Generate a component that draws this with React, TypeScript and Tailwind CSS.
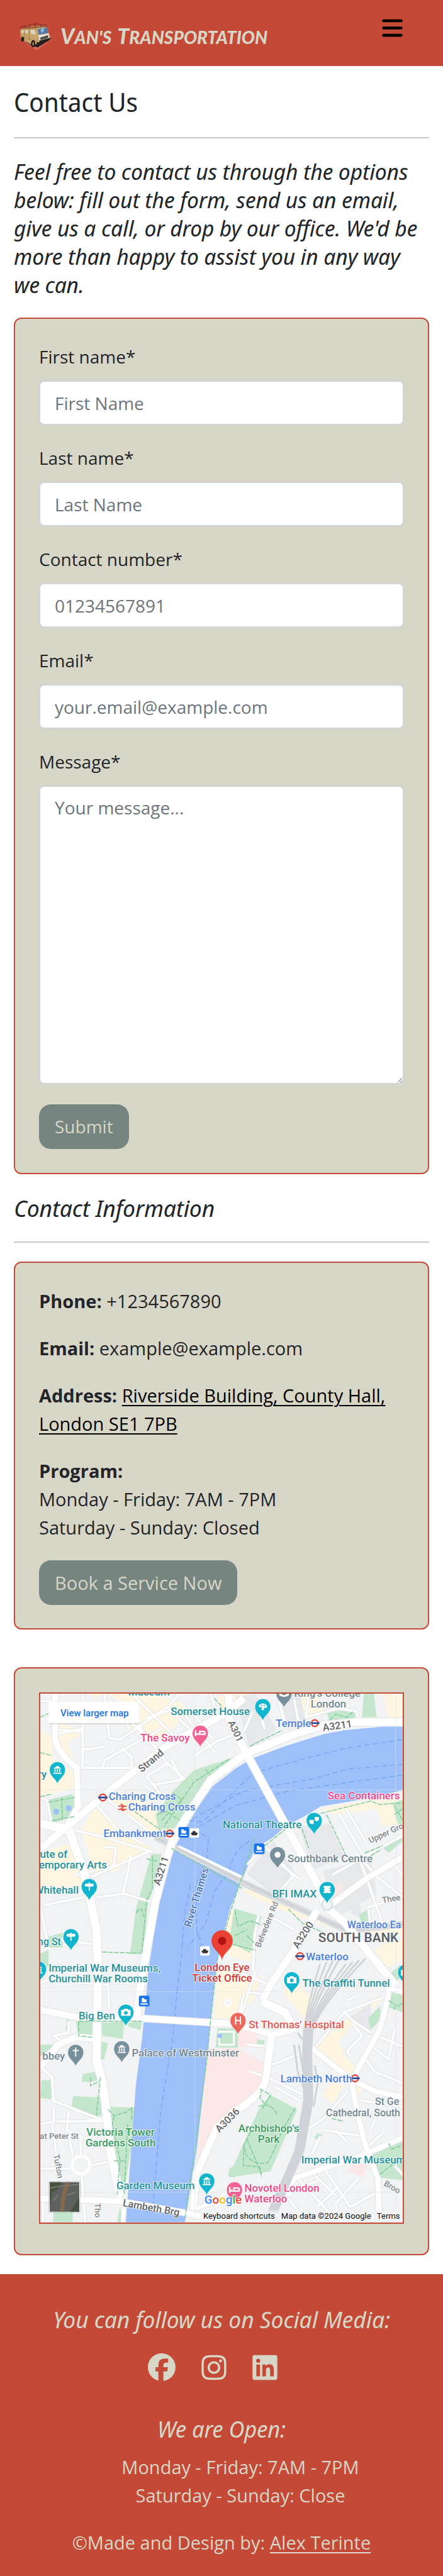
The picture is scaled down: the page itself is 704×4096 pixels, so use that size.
import type { ReactNode } from "react";
import { FaBars, FaFacebook, FaInstagram, FaLinkedin } from "react-icons/fa6";

const TEAL = "#1f919d";
const BLUE = "#4b80dd";
const PINK = "#ee4789";
const SLATE = "#72878f";
const ROAD = "#5f6368";
const PARK = "#3b9a5f";
const RED = "#c93b37";
const PIN_TEAL = "#12b5cb";
const PIN_SLATE = "#78909c";

type Label = { t: string; x: number; y: number; c: string; s?: number; a?: "start" | "middle" | "end"; r?: number; w?: number };

const labels: Label[] = [
  { t: "Museum", x: 149, y: 3, c: TEAL },
  { t: "Somerset House", x: 221, y: 36, c: TEAL },
  { t: "The Savoy", x: 170, y: 81, c: PINK },
  { t: "Strand", x: 191, y: 118, c: ROAD, a: "middle", r: -40, s: 17 },
  { t: "ry", x: 11, y: 143, c: TEAL, a: "end" },
  { t: "Charing Cross", x: 116, y: 180, c: BLUE },
  { t: "Charing Cross", x: 149, y: 198, c: BLUE },
  { t: "Embankment", x: 107, y: 243, c: BLUE },
  { t: "ute of", x: 46, y: 278, c: TEAL, a: "end" },
  { t: "emporary Arts", x: 113, y: 296, c: TEAL, a: "end" },
  { t: "Whitehall", x: 65, y: 339, c: TEAL, a: "end" },
  { t: "ng St", x: 35, y: 426, c: TEAL, a: "end", s: 17 },
  { t: "A3211", x: 210, y: 302, c: ROAD, a: "middle", r: -72, s: 17 },
  { t: "River Thames", x: 270, y: 347, c: "#4470bd", a: "middle", r: -73, s: 17 },
  { t: "Imperial War Museums,", x: 14, y: 471, c: TEAL },
  { t: "Churchill War Rooms", x: 14, y: 489, c: TEAL },
  { t: "London Eye", x: 308, y: 470, c: RED, a: "middle", s: 18 },
  { t: "Ticket Office", x: 308, y: 488, c: RED, a: "middle", s: 18 },
  { t: "Big Ben", x: 65, y: 552, c: TEAL },
  { t: "bbey", x: 42, y: 620, c: SLATE, a: "end" },
  { t: "Palace of Westminster", x: 155, y: 615, c: SLATE },
  { t: "Victoria Tower", x: 136, y: 749, c: PARK, a: "middle" },
  { t: "Gardens South", x: 136, y: 767, c: PARK, a: "middle" },
  { t: "at Peter St", x: 65, y: 755, c: "#80868b", a: "end", s: 14 },
  { t: "Tufton", x: 26, y: 802, c: "#80868b", a: "middle", s: 14, r: 80 },
  { t: "Tho", x: 92, y: 864, c: "#80868b", s: 14, r: 88 },
  { t: "Garden Museum", x: 129, y: 840, c: TEAL },
  { t: "Lambeth Brg", x: 187, y: 877, c: ROAD, a: "middle", r: 10, s: 17 },
  { t: "King's College", x: 430, y: 5, c: SLATE },
  { t: "London", x: 458, y: 23, c: SLATE },
  { t: "Temple", x: 399, y: 56, c: BLUE },
  { t: "A3211", x: 504, y: 60, c: ROAD, a: "middle", r: -8, s: 17 },
  { t: "A301", x: 326, y: 66, c: ROAD, a: "middle", r: 65, s: 16 },
  { t: "Sea Containers", x: 487, y: 179, c: PINK },
  { t: "National Theatre", x: 309, y: 228, c: TEAL },
  { t: "Upper Gro", x: 559, y: 254, c: "#80868b", r: -25, s: 14 },
  { t: "Southbank Centre", x: 419, y: 286, c: SLATE },
  { t: "BFI IMAX", x: 393, y: 345, c: TEAL },
  { t: "Belvedere Rd", x: 388, y: 393, c: "#80868b", a: "middle", r: -68, s: 14 },
  { t: "A3200", x: 450, y: 412, c: ROAD, a: "middle", r: -57, s: 17 },
  { t: "Thee", x: 580, y: 355, c: "#80868b", r: -10, s: 14 },
  { t: "Waterloo Ea", x: 520, y: 398, c: BLUE, s: 17 },
  { t: "SOUTH BANK", x: 471, y: 421, c: "#5f6368", s: 22, w: 600 },
  { t: "Waterloo", x: 450, y: 452, c: BLUE },
  { t: "The Graffiti Tunnel", x: 444, y: 497, c: TEAL },
  { t: "St Thomas' Hospital", x: 353, y: 567, c: "#e25950" },
  { t: "Lambeth North", x: 407, y: 659, c: BLUE },
  { t: "St Ge", x: 567, y: 697, c: SLATE, s: 17 },
  { t: "Cathedral, South", x: 484, y: 716, c: SLATE, s: 17 },
  { t: "Archbishop's", x: 387, y: 743, c: PARK, a: "middle" },
  { t: "Park", x: 387, y: 761, c: PARK, a: "middle" },
  { t: "A3036", x: 321, y: 727, c: ROAD, a: "middle", r: -45, s: 17 },
  { t: "Imperial War Museum", x: 442, y: 796, c: TEAL },
  { t: "Broo", x: 581, y: 833, c: "#80868b", r: 30, s: 14 },
  { t: "Novotel London", x: 346, y: 844, c: PINK },
  { t: "Waterloo", x: 346, y: 862, c: PINK },
];

const minorRoads = [
  "M0 13H25M27 61L72 64M72 0V126M72 126H155V108L138 92M109 0L117 75 135 78 215 23M105 126L110 112 205 60",
  "M155 0L215 60 240 88M165 52L215 118 245 145M120 12L180 75M179 42L232 24M215 23L255 62M240 30L296 100",
  "M178 157L210 178 180 140 216 118M190 155L240 146 222 112M262 104L300 80 334 68M288 0L296 24M250 20L292 77",
  "M0 175L12 182 18 215M0 225L45 228 110 244 190 268M110 260L128 261 125 290 88 310 187 266M154 275L140 340M96 345L142 339 184 352",
  "M0 360L12 420M8 358L75 345M92 300L60 308M95 188L130 230 175 255M112 178L180 230M20 415L90 425",
  "M65 490L115 494 117 535M0 490L30 480M48 555V575L22 580 48 595M92 542V585M0 632L20 650 22 690 85 715 105 722M23 702V725L0 730M20 730L30 800M48 710L45 740 72 752",
  "M115 725L82 722M48 745L55 785M68 750V782M0 805L50 805M85 800L120 792M70 812L76 896M5 850V896M28 725L120 725",
  "M400 0L415 50M430 10L440 60M455 0L450 40 505 25 535 30 540 44M360 30L345 64M380 60L370 20",
  "M518 195L552 252M505 202L548 276M495 307L614 240M538 272L580 390M430 308L405 335 395 370M350 290L380 258 430 310M402 285L440 315",
  "M555 362L614 345M545 282L570 310 614 345M556 365L560 400M370 375L363 410 360 470M395 380L430 400M320 465L400 498M600 290L614 310",
  "M345 510L335 550M300 460L370 485M365 470L340 545M350 505L380 510M350 595L385 598M355 640L382 650M385 630L404 625 440 610M385 650L445 680M395 665L440 690",
  "M465 600L515 540 580 515M515 540L530 555 560 575M520 520L535 512M530 560L545 580 520 605 525 615M570 580L614 598M565 600L590 620 600 570M545 610L565 640 614 660",
  "M520 675L480 720 450 740 435 790M480 740L545 750M475 750L460 780M500 740L520 760M530 790L580 745M435 820L490 880M460 812L500 850M480 804L525 870 580 840",
  "M540 820L500 865 510 896M505 835L470 870M430 840L470 826M420 855L450 896M395 880L420 896M600 800L614 815M545 690L614 700M575 700L560 740",
  "M70 60L30 68M72 95L110 90M74 20L110 22M235 0L216 24M135 10L150 60",
];

const mainRoads: [string, number][] = [
  ["M0 263L45 226 119 163 215 88 309 36 345 8", 12],
  ["M25 0V75Q28 100 62 126L64 191 45 225", 10],
  ["M0 220L45 230M49 232L75 305 95 398 98 470 95 622Q105 650 110 691L119 777 135 853", 14],
  ["M162 555L172 480 195 353 215 277 225 246 259 191 289 146 349 101 429 69 482 53 539 48H614", 13],
  ["M0 536L65 549 165 550 332 560 392 577", 11],
  ["M0 632L30 595 62 582 95 585", 11],
  ["M319 0L320 43 349 101 415 222 469 322 485 363 515 387 559 442 602 495", 13],
  ["M489 360L555 312 614 277", 10],
  ["M469 367L432 432 392 490 377 519M392 577L382 653Q378 680 329 708L299 736 265 812 259 874", 12],
  ["M375 522L415 540 429 568 392 577", 13],
  ["M459 600L525 653 570 675 614 684", 9],
  ["M614 505L591 500 589 515 575 570 529 653", 9],
  ["M527 653L533 690 549 760 572 822 574 896", 9],
  ["M614 753L549 781 429 822 420 850", 9],
  ["M0 856L132 860 245 880 290 890", 10],
  ["M135 853L142 870 140 896M259 874L300 860 320 840", 6],
];

const tracks = [0, 1, 2, 3, 4, 5, 6, 7];

const glyphs: Record<string, ReactNode> = {
  bed: <path d="M-8-5V5M-8 2H8V-1Q8-3 5-3H-1V2M-5-1V0" stroke="#fff" strokeWidth="2.4" fill="none" />,
  museum: <path d="M-7-2L0-7 7-2ZM-5-1H-3V4H-5ZM-1-1H1V4H-1ZM3-1H5V4H3ZM-7 5H7V7H-7Z" fill="#fff" />,
  sign: <path d="M-1-7H1V-5H6L8-3 6 0H1V7H-1V0H-6L-8-2-6-5H-1Z" fill="#fff" />,
  cross: <path d="M-1-8H1V-4H5V-2H1V7H-1V-2H-5V-4H-1Z" fill="#fff" />,
  camera: <path fillRule="evenodd" d="M-8-4H-4L-3-6H3L4-4H8V6H-8ZM0-2A3 3 0 1 0 0 4 3 3 0 1 0 0-2Z" fill="#fff" />,
  film: <path d="M-6-6H6V-3H4V-1H6V1H4V3H6V6H-6V3H-4V1H-6V-1H-4V-3H-6Z" fill="#fff" />,
  masks: <path d="M-8-1H-1V6Q-5 7-8 4ZM1-6H8V-1Q5 3 2 0L1 1Z" fill="#fff" />,
  palette: <path d="M-7-2Q0-9 7-2 8 3 3 2 1 2 2 5 0 8-2 5V1H-6ZM-3-3h2v2h-2zM2-3h2v2H2z" fillRule="evenodd" fill="#fff" />,
  h: <path d="M-5-7H-3V-1H3V-7H5V7H3V1H-3V7H-5Z" fill="#fff" />,
  dot: <circle r="5" fill="#fff" />,
  cap: <path d="M-8-1L0 3 8-1V3Q0 8-8 3Z" fill="#fff" />,
};

const pins: [number, number, string, string][] = [
  [271, 67, "#f06292", "bed"],
  [29, 129, PIN_TEAL, "museum"],
  [83, 327, PIN_TEAL, "sign"],
  [52, 412, PIN_TEAL, "sign"],
  [-3, 467, PIN_TEAL, "museum"],
  [377, 22, PIN_TEAL, "palette"],
  [413, 0, PIN_SLATE, "cap"],
  [464, 215, PIN_TEAL, "masks"],
  [402, 273, PIN_SLATE, "dot"],
  [486, 332, PIN_TEAL, "film"],
  [426, 485, PIN_TEAL, "camera"],
  [619, 472, PIN_TEAL, "camera"],
  [335, 554, "#ec675c", "h"],
  [145, 540, PIN_TEAL, "camera"],
  [60, 608, PIN_SLATE, "cross"],
  [138, 602, PIN_SLATE, "museum"],
  [282, 826, PIN_TEAL, "museum"],
  [329, 841, "#f06292", "bed"],
];

const stations: [number, number][] = [[106, 176], [219, 237], [465, 50], [440, 445], [533, 652]];
const piers: [number, number][] = [[243, 235], [371, 263], [176, 521]];
const boats: [number, number][] = [[261, 236], [279, 436]];

function LondonMap() {
  return (
    <svg viewBox="0 0 614 896" className="block w-full font-['Roboto',sans-serif]" role="img" aria-label="Map of the South Bank, London">
      <rect width="614" height="896" fill="#f1f3f4" />
      <g fill="#fef6e0">
        <path d="M85 0H110L90 8ZM33 50L65 60V75L45 80 55 110 38 95 28 70ZM0 65L20 70V110L55 130 60 160 20 170 0 172Z" />
        <path d="M118 0H180L240 15 250 30 215 70 190 85 150 55 165 50 140 20ZM300 5L350 0V20L305 32ZM430 0H465L480 30 440 50 425 35Z" />
        <path d="M70 230L90 195 120 210 145 240 190 262 150 280 130 300 90 305ZM120 180L160 165 205 210 225 240 195 240 130 195ZM0 270L60 250 80 330 0 325Z" />
        <path d="M300 455L320 470 375 480 360 520 330 550H295L300 480ZM345 335L360 325 480 385 614 398V410L520 405 440 380 350 340ZM330 365L322 370 305 440 358 455 360 440Z" />
        <path d="M475 195L570 180 614 175V220L580 225 570 195 500 205ZM565 435L600 415 614 420V450L590 465ZM410 505L430 490 470 520 455 560ZM460 600L515 555 575 510 580 520 525 565 505 590 520 620 540 640 520 645 490 630ZM478 680L495 655 515 665 495 695ZM535 655L545 675 537 680Z" />
        <path d="M560 25L570 30V45H555ZM580 0H600L614 8V45H590Z" />
      </g>
      <g fill="#e6e8ec">
        <path d="M330 5L365 0 400 60 355 95ZM405 0H440L450 50 420 60ZM395 250L430 300 400 345 350 305ZM440 225L490 220 515 275 460 300ZM480 300L560 280 570 340 500 380ZM515 350L540 345 545 380 530 375ZM520 550L560 525 560 580Z" />
      </g>
      <g fill="#fce8e6">
        <path d="M284 602L335 600 385 630 375 670 310 715 265 795ZM325 560L365 565 370 600 325 598ZM495 325L510 320 513 335 500 345ZM518 810L535 795 555 800 545 820 530 812Z" />
      </g>
      <g fill="#c3e6cd">
        <path d="M328 108L290 150 232 228 200 230 195 205 225 165 260 130ZM188 272H205L200 300 182 360 175 440 152 442 162 365ZM14 180L55 170 60 205 22 220ZM0 440L14 435V460L5 475H0ZM14 412L38 405V430H16Z" />
        <path d="M60 553L95 555 90 580 65 583ZM103 558L142 556 140 585 105 580ZM148 558L172 556 170 570 150 565ZM104 590L115 592 108 620H102ZM0 595L25 595 0 615ZM2 655L20 655V688L0 685ZM72 645L95 640 98 655 85 658 70 658ZM56 682L105 685V715L85 717 52 705ZM115 700L160 702 155 765 140 855 128 850ZM46 548L50 555 48 574 43 570Z" />
        <path d="M328 364L375 378 355 440 320 420ZM485 30L535 28 533 42 490 48ZM548 0H565L570 40H545ZM300 567L335 568V600H297ZM368 586L380 588V600L366 598ZM390 680L435 705 390 810 320 820 332 790 370 705ZM540 375L555 365 560 385 543 388Z" />
        <path d="M560 780L614 757V825L575 820ZM590 515L603 498 614 512V540L590 532ZM575 530L578 550 560 570 555 550ZM580 260L614 245V250L590 270ZM597 185L614 180V222L605 220ZM470 745L478 748 472 758 464 753ZM22 872L55 870V896H22ZM588 478L610 460 614 480 605 486ZM135 870L140 896H130ZM320 806L333 795 330 820 318 818Z" />
      </g>
      <g fill="none" stroke="#dfe2e5" strokeWidth="6" strokeLinejoin="round">{minorRoads.map((d) => <path key={d} d={d} />)}</g>
      <path
        fill="#9dc0fa"
        d="M614 56H579L515 62 479 69 415 89 359 110 332 126 292 157 265 196 252 219 232 253 219 281 205 332 195 394 189 432 183 470 179 519 172 588 162 663 155 760 145 896H245L265 774 282 622 292 519 300 452 312 401 322 363 345 308 365 260 379 253 395 243 415 225 449 207 475 191 529 182 569 174 614 164Z"
      />
      <circle cx="27" cy="200" r="5" fill="#9dc0fa" />
      <circle cx="48" cy="194" r="5" fill="#9dc0fa" />
      <g fill="none" stroke="#78a6f3" strokeWidth="1.5" strokeDasharray="9 5">
        <path d="M252 215L275 217 330 165 360 135 440 112 520 92 614 78M258 212L345 165 460 145 520 128 614 120M270 225L330 190 420 165 540 148 614 138M262 230L285 245 282 280 262 330 265 400 275 430M355 250Q330 260 320 300L295 335 280 390 250 430M240 430L245 370 255 320M232 500L225 580 205 700 190 880M240 440L232 500" />
      </g>
      <g fill="none" stroke="#fff" strokeWidth="4" strokeLinejoin="round">{minorRoads.map((d) => <path key={d} d={d} />)}</g>
      <path d="M195 243L332 313 342 320 462 375 522 402 614 391" fill="none" stroke="#d0d3d8" strokeWidth="11" />
      <path d="M195 240L332 309 462 371 522 398 614 388M195 247L332 318 462 380 522 406 614 395" fill="none" stroke="#e6e8ea" strokeWidth="1.5" />
      <path d="M235 259L342 311" stroke="#fff" strokeWidth="4" />
      {mainRoads.map(([d, w]) => <path key={d} d={d} fill="none" stroke="#e3e5e8" strokeWidth={w + 2} strokeLinejoin="round" />)}
      {mainRoads.map(([d, w]) => <path key={d} d={d} fill="none" stroke="#fff" strokeWidth={w} strokeLinejoin="round" />)}
      <g fill="none" stroke="#cfd3d7" strokeWidth="3">
        {tracks.map((i) => (
          <path key={i} d={`M${474 + i * 11} ${458 - (i % 4) * 3}Q${452 + i * 3} 530 ${447 + i * 2} 570L${445 + i * 2} 610 ${447 + i * 2} 690 ${432 + i * 2} 775 ${386 + i * 2} 880`} />
        ))}
        <path d="M430 595L436 640 452 685M438 595L445 640M465 630L470 660 463 700M436 575L455 600" />
      </g>
      <circle cx="69" cy="799" r="15" fill="#f1f3f4" stroke="#fff" strokeWidth="5" />
      <circle cx="486" cy="358" r="9" fill="#f1f3f4" stroke="#dfe2e5" strokeWidth="3" />
      <circle cx="318" cy="524" r="5" fill="#f1f3f4" stroke="#fff" strokeWidth="3" />
      <rect x="303" y="573" width="25" height="22" fill="none" stroke="#fff" strokeWidth="3" />
      <circle cx="304" cy="580" r="4" fill="#9dc0fa" />
      <g fill="none" stroke="#7fcb97" strokeWidth="1.6" strokeDasharray="8 2">
        <path d="M320 111L260 150 210 225M280 128L288 138M225 168L240 180 205 215M198 205L215 200 236 215M160 200L205 232M0 100L20 105M0 40L22 30M14 184L58 176M20 215L60 208M36 176L38 215M0 175L20 170M355 89L410 62M295 8L308 22M222 262L342 330M362 244L345 300 322 370 300 450 290 540 282 622 262 770 245 890" />
        <path d="M380 258L415 230M440 220L455 262M485 205L518 275M475 203L560 182 575 188 614 185M190 275V330L180 350 172 440M163 372Q165 365 172 365L175 378M180 280L200 285M105 438L170 440M65 555V580L90 583M65 555H172M115 705L125 715 145 710 155 702V725M125 715L122 730 135 790 130 850M148 730L142 850M125 792H144M85 650V665L100 657M102 650L95 715" />
        <path d="M372 670L390 680 375 705M375 670L372 685 380 695M370 700Q390 690 402 715M432 702L410 740 398 770 385 795Q360 800 348 780L345 765 358 740M350 755L375 815M345 765L344 800 372 802 375 820M330 368L335 395 355 385 375 392M350 410L365 425M330 410L350 400M325 425L365 435M490 45L500 35 520 40 530 30M590 520L605 530 614 525M600 530V535M575 815L600 795M590 762L595 772 614 765M550 270L580 258M560 275L575 265M600 190L614 215M600 205L614 195M494 720L514 725M420 365L445 390 480 405" />
      </g>
      <g stroke="#dfe6ef" strokeWidth="1" opacity=".6">
        <path d="M0 163H614M0 505H614M0 845H614M262 0V896M602 0V896" />
      </g>

      {stations.map(([x, y]) => (
        <g key={`${x}-${y}`}>
          <circle cx={x} cy={y} r="5.5" fill="#fff" stroke="#e0453c" strokeWidth="2.6" />
          <path d={`M${x - 8} ${y}H${x + 8}`} stroke="#2b4a9a" strokeWidth="3" />
        </g>
      ))}
      <path d="M132 191H146M132 196H146M136 187L142 191 136 196 142 199" stroke="#ea4b44" strokeWidth="2" fill="none" />
      {piers.map(([x, y]) => (
        <g key={`${x}-${y}`}>
          <rect x={x - 9} y={y - 9} width="18" height="18" rx="3" fill="#1a73e8" />
          <path d={`M${x - 4} ${y - 5}h4v2h4v5h-8zM${x - 6} ${y + 4}h12v2h-12z`} fill="#fff" />
        </g>
      ))}
      {boats.map(([x, y]) => (
        <g key={`${x}-${y}`}>
          <rect x={x - 8} y={y - 8} width="16" height="16" rx="2" fill="#fff" />
          <path d={`M${x - 6} ${y}l3-1v-2h5v2l4 1-2 4h-8z`} fill="#333" />
        </g>
      ))}
      {pins.map(([x, y, c, g]) => (
        <g key={`${x}-${y}`}>
          <path transform={`translate(${x} ${y})`} d="M0 25C-1 16-13.500 12-13.500 0A13.500 13.500 0 0 1 13.500 0C13.500 12 1 16 0 25Z" fill={c} stroke="#fff" strokeWidth=".8" />
          <g transform={`translate(${x} ${y})`}>{glyphs[g]}</g>
        </g>
      ))}
      <path d="M308 452C306 438 290 434 290 419A18 18 0 0 1 326 419C326 434 310 438 308 452Z" fill="#ea4335" />
      <circle cx="308" cy="419" r="7" fill="#b31412" />

      {labels.map((l) => (
        <text
          key={`${l.t}-${l.x}-${l.y}`}
          x={l.x}
          y={l.y}
          fill={l.c}
          fontSize={l.s ?? 18}
          fontWeight={l.w ?? 500}
          textAnchor={l.a ?? "start"}
          transform={l.r ? `rotate(${l.r} ${l.x} ${l.y})` : undefined}
          stroke="#fff"
          strokeWidth="2"
          strokeOpacity=".8"
          strokeLinejoin="round"
          paintOrder="stroke"
        >
          {l.t}
        </text>
      ))}

      <a href="#map">
        <rect x="15" y="16" width="153" height="36" fill="#000" opacity=".12" />
        <rect x="14" y="14" width="154" height="36" rx="1" fill="#fff" />
        <text x="34" y="38" fontSize="16" fontWeight="500" fill="#1a73e8">View larger map</text>
      </a>

      <rect x="14" y="826" width="54" height="54" rx="3" fill="#000" opacity=".2" />
      <rect x="15" y="827" width="52" height="52" rx="2" fill="#fff" />
      <rect x="16" y="828" width="50" height="50" rx="1" fill="#5d625f" />
      <path d="M16 828H36L30 840 20 845 16 870ZM50 878L66 855V878Z" fill="#46533f" />
      <path d="M42 828L36 850 33 878H40L43 850 50 828Z" fill="#85694e" />
      <path d="M16 838L40 834 66 832M45 850L60 845M22 860L30 850" stroke="#7d7b70" strokeWidth="2" fill="none" />

      <rect x="270" y="876" width="344" height="20" fill="#f1f3f4" opacity=".7" />
      <text x="278" y="865" fontSize="20" fontWeight="500" stroke="#fff" strokeWidth="2" paintOrder="stroke">
        <tspan fill="#4285f4">G</tspan><tspan fill="#ea4335">o</tspan><tspan fill="#fbbc04">o</tspan><tspan fill="#4285f4">g</tspan><tspan fill="#34a853">l</tspan><tspan fill="#ea4335">e</tspan>
      </text>
      <g fontSize="14" fill="#111">
        <text x="276" y="890">Keyboard shortcuts</text>
        <text x="408" y="890">Map data ©2024 Google</text>
        <text x="570" y="890">Terms</text>
      </g>
    </svg>
  );
}

function VanLogo() {
  return (
    <svg viewBox="0 0 52 48" className="h-[46px] w-[50px]" aria-hidden="true">
      <path d="M0 27L28 47 52 30 40 24Z" fill="#d4685a" />
      <path d="M3 28L20 39 30 42 50 30 48 26 24 30Z" fill="#2b1d1c" />
      <path d="M1 12L21 7 44 6 45 9 26 16 2 14Z" fill="#b58a4f" />
      <path d="M1 13L26 12 29 30 28 37 21 38 2 28Z" fill="#c9a468" />
      <path d="M26 12Q35 7 45 9L50 22 51 27 31 34 28 33Z" fill="#c3a273" />
      <path d="M30 12L45 9 48 18 32 21Z" fill="#4f78a5" />
      <path d="M35 12L41 10 40 16 36 18Z" fill="#93b6d3" />
      <path d="M31 22L48 19 50 26 33 31Z" fill="#e4dfd4" />
      <path d="M34 26L47 22 48 26 35 30Z" fill="#4d4846" />
      <path d="M33 31L52 26V28L33 35Z" fill="#26201f" />
      <path d="M3 13.500L7 13.500V18L3 18ZM8.500 13.500L14 13V19L9 18ZM18 13L25 13 27 20 19 20Z" fill="#d9d2c0" />
      <path d="M16 13V30M8 14V27" stroke="#8f713f" strokeWidth=".7" />
      <path d="M3 24L15 28 28 32" stroke="#a27f46" strokeWidth="1" fill="none" />
      <ellipse cx="22.500" cy="36" rx="3.500" ry="6" fill="#231b1a" />
      <ellipse cx="22.500" cy="36" rx="1.500" ry="3" fill="#98805b" />
      <ellipse cx="5" cy="28.500" rx="2.500" ry="4" fill="#231b1a" />
      <path d="M2 12V8L26 3 44 5V8M2 8L16 10 44 7M9 10V7M17 10V5M26 9V3M35 9V4M26 1V4" stroke="#6b2e27" strokeWidth=".9" fill="none" />
    </svg>
  );
}

const cardClass = "rounded-[12px] border-2 border-[#c44936] bg-[#d8d6c6] px-[38px] pt-[38px]";
const inputClass =
  "block w-full rounded-[8px] border-2 border-[#ced4da] bg-white px-[23px] placeholder:text-[#6c757d] placeholder:opacity-100";
const buttonClass = "inline-flex h-[71px] items-center rounded-[19px] bg-[#778581] px-[25px] text-[#d8d6c6]";
const headingFont = "font-['Noto_Sans_Display','Noto_Sans',sans-serif]";

const fields = [
  { id: "first-name", label: "First name*", placeholder: "First Name", type: "text" },
  { id: "last-name", label: "Last name*", placeholder: "Last Name", type: "text" },
  { id: "number", label: "Contact number*", placeholder: "01234567891", type: "tel" },
  { id: "email", label: "Email*", placeholder: "your.email@example.com", type: "email" },
];

export default function App() {
  return (
    <div className="bg-white font-['Open_Sans','Noto_Sans',sans-serif] text-[28px] leading-[45px] text-[#212529]">
      <header className="flex h-[105px] items-start justify-between bg-[#c44936] pr-[64px] pl-[31px]">
        <a href="#home" className="flex items-center gap-[15px] pt-[35px] text-[#d8d6c6]">
          <VanLogo />
          <span className="flex items-baseline gap-[9px] font-['Lato',sans-serif] text-[28px] leading-[36px] font-black uppercase italic">
            <span className="inline-block first-letter:text-[34px]">Van's</span>
            <span className="inline-block first-letter:text-[34px]">Transportation</span>
          </span>
        </a>
        <button type="button" aria-label="Open menu" className="mt-[26px] text-black">
          <FaBars className="h-[37px] w-[33px]" />
        </button>
      </header>

      <main className="px-[22px]">
        <h1 className={`${headingFont} pt-[30px] text-[41px] leading-[54px]`}>Contact Us</h1>
        <hr className="mt-[29px] border-t-2 border-[#c8c9ca]" />
        <p className={`${headingFont} mt-[30px] text-[35px] leading-[45px] italic`}>
          Feel free to contact us through the options below: fill out the form, send us an email, give us a call, or drop by our office. We'd be more than happy to assist you in any way we can.
        </p>

        <form className={`${cardClass} mt-[30px] pb-[38px]`} onSubmit={(e) => e.preventDefault()}>
          {fields.map((f) => (
            <div key={f.id} className="mb-[30px]">
              <label htmlFor={f.id} className="mb-[15px] block">{f.label}</label>
              <input id={f.id} type={f.type} placeholder={f.placeholder} className={`${inputClass} h-[71px]`} />
            </div>
          ))}
          <label htmlFor="message" className="mb-[15px] block">Message*</label>
          <textarea id="message" placeholder="Your message..." className={`${inputClass} h-[475px] resize-y py-[11px]`} />
          <button type="submit" className={`${buttonClass} mt-[32px]`}>Submit</button>
        </form>

        <h2 className={`${headingFont} mt-[30px] text-[37px] leading-[48px] italic`}>Contact Information</h2>
        <hr className="mt-[29px] border-t-2 border-[#c8c9ca]" />

        <section className={`${cardClass} mt-[30px] flex flex-col items-start gap-[30px] pb-[37px] text-[29px]`}>
          <p><strong>Phone:</strong> +1234567890</p>
          <p><strong>Email:</strong> example@example.com</p>
          <p>
            <strong>Address:</strong>{" "}
            <a href="#map" className="text-black underline decoration-2 underline-offset-4">Riverside Building, County Hall, London SE1 7PB</a>
          </p>
          <p>
            <strong>Program:</strong>
            <br />
            Monday - Friday: 7AM - 7PM
            <br />
            Saturday - Sunday: Closed
          </p>
          <a href="#book" className={buttonClass}>Book a Service Now</a>
        </section>

        <section id="map" className={`${cardClass} mt-[60px] pb-[48px]`}>
          <div className="overflow-hidden border-2 border-[#c44936]">
            <LondonMap />
          </div>
        </section>
      </main>

      <footer className="mt-[30px] bg-[#c44936] pb-[32px] text-center text-[29px] text-[#d8d6c6]">
        <h2 className={`${headingFont} pt-[48px] text-[37px] leading-[48px] italic`}>You can follow us on Social Media:</h2>
        <div className="mt-[30px] flex items-center justify-center gap-[41px] pr-[28px]">
          <a href="#facebook" aria-label="Facebook"><FaFacebook className="size-[44px]" /></a>
          <a href="#instagram" aria-label="Instagram"><FaInstagram className="h-[45px] w-[40px]" /></a>
          <a href="#linkedin" aria-label="LinkedIn"><FaLinkedin className="h-[45px] w-[40px]" /></a>
        </div>
        <h3 className={`${headingFont} mt-[52px] text-[36px] leading-[48px] italic`}>We are Open:</h3>
        <ul className="mt-[13px] pl-[60px]">
          <li>Monday - Friday: 7AM - 7PM</li>
          <li>Saturday - Sunday: Close</li>
        </ul>
        <p className="mt-[30px]">
          ©Made and Design by: <a href="#author" className="underline decoration-2 underline-offset-4">Alex Terinte</a>
        </p>
      </footer>
    </div>
  );
}
